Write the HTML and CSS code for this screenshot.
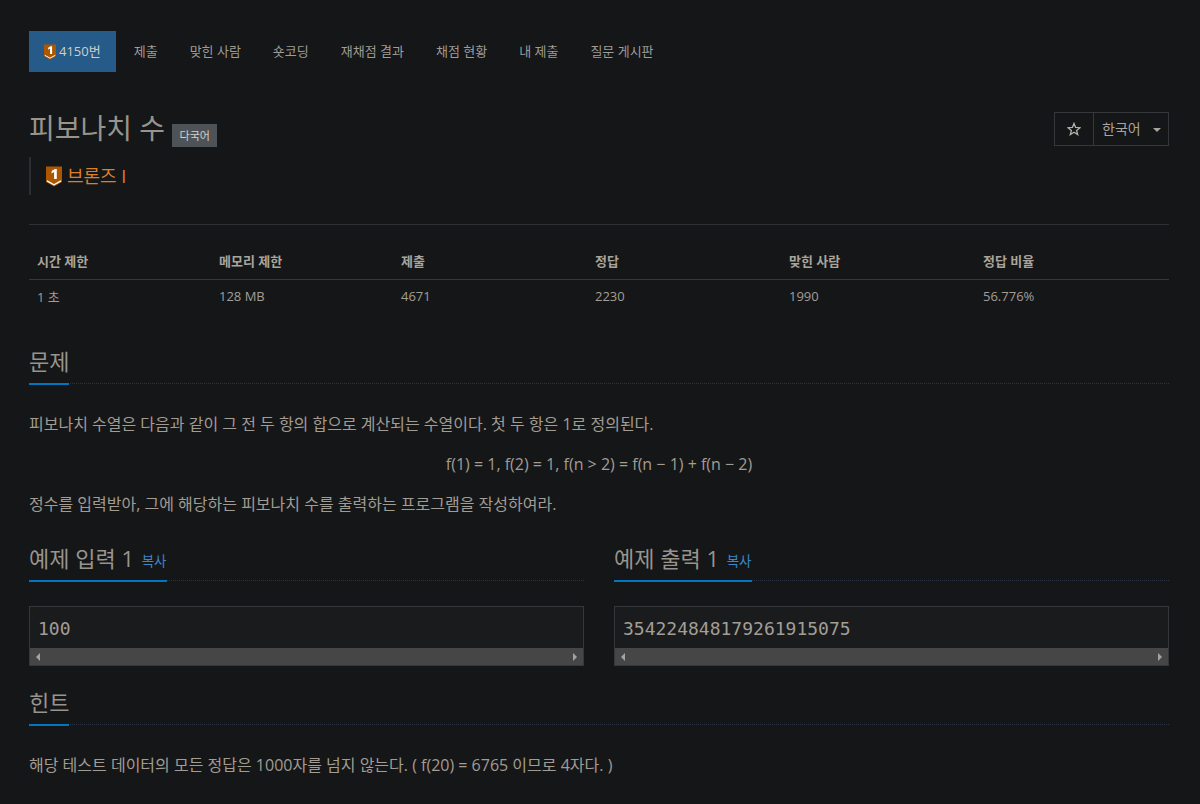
FILE: index.html
```html
<!DOCTYPE html>
<html lang="ko">
<head>
<meta charset="utf-8">
<title>피보나치 수</title>
<link rel="stylesheet" href="styles.css">
</head>
<body>
<svg class="defs" width="0" height="0" aria-hidden="true">
  <symbol id="tier" viewBox="0 0 16 20">
    <path d="M0 0H16V15.5L8 20L0 15.5Z" fill="#ad5600"/>
    <path d="M1 14.4L8 18.2L15 14.4" fill="none" stroke="#fff" stroke-width="1.3"/>
    <path d="M5.6 4.4L8.8 2.4H10.8V12.6H8.1V5.4L5.6 6.9Z" fill="#fff"/>
  </symbol>
</svg>
<main class="page">
  <nav class="tabs">
    <a class="tab active"><svg class="tier-small"><use href="#tier"/></svg>4150번</a>
    <a class="tab">제출</a>
    <a class="tab">맞힌 사람</a>
    <a class="tab">숏코딩</a>
    <a class="tab">재채점 결과</a>
    <a class="tab">채점 현황</a>
    <a class="tab">내 제출</a>
    <a class="tab">질문 게시판</a>
  </nav>

  <header class="head">
    <div class="head-left">
      <h1 class="title"><span class="title-text">피보나치 수</span><span class="badge">다국어</span></h1>
      <div class="tier-line"><svg class="tier-big"><use href="#tier"/></svg><a class="tier-name">브론즈 I</a></div>
    </div>
    <div class="btn-group">
      <span class="btn star"><svg class="star-icon" viewBox="0 0 14 14"><path d="M7 1.4L8.6 5.4L12.9 5.7L9.6 8.4L10.7 12.6L7 10.3L3.3 12.6L4.4 8.4L1.1 5.7L5.4 5.4Z" fill="none" stroke="#b5b0a8" stroke-width="1.3"/></svg></span>
      <span class="btn lang">한국어<i class="caret"></i></span>
    </div>
  </header>

  <hr class="rule">

  <table class="info">
    <thead>
      <tr><th class="c1">시간 제한</th><th class="c2">메모리 제한</th><th class="c3">제출</th><th class="c4">정답</th><th class="c5">맞힌 사람</th><th>정답 비율</th></tr>
    </thead>
    <tbody>
      <tr><td>1 초</td><td>128 MB</td><td>4671</td><td>2230</td><td>1990</td><td>56.776%</td></tr>
    </tbody>
  </table>

  <section class="section problem">
    <div class="headline"><h2>문제</h2></div>
    <div class="body">
      <p>피보나치 수열은 다음과 같이 그 전 두 항의 합으로 계산되는 수열이다. 첫 두 항은 1로 정의된다.</p>
      <p class="center">f(1) = 1, f(2) = 1, f(n &gt; 2) = f(n − 1) + f(n − 2)</p>
      <p>정수를 입력받아, 그에 해당하는 피보나치 수를 출력하는 프로그램을 작성하여라.</p>
    </div>
  </section>

  <div class="samples">
    <section class="sample">
      <div class="headline"><h2>예제 입력 1 <small>복사</small></h2></div>
      <div class="pre">
        <div class="code">100</div>
        <div class="scroll"><i class="arr left"></i><i class="arr right"></i></div>
      </div>
    </section>
    <section class="sample">
      <div class="headline"><h2>예제 출력 1 <small>복사</small></h2></div>
      <div class="pre">
        <div class="code">354224848179261915075</div>
        <div class="scroll"><i class="arr left"></i><i class="arr right"></i></div>
      </div>
    </section>
  </div>

  <section class="section hint">
    <div class="headline"><h2>힌트</h2></div>
    <div class="body">
      <p>해당 테스트 데이터의 모든 정답은 1000자를 넘지 않는다. ( f(20) = 6765 이므로 4자다. )</p>
    </div>
  </section>
</main>
</body>
</html>
```
FILE: styles.css
```css
* { box-sizing: border-box; }
html, body { margin: 0; padding: 0; }
body {
  background: #151618;
  color: #a29c93;
  font-family: "Open Sans", "Noto Sans CJK KR", sans-serif;
  font-size: 14px;
  height: 804px;
  overflow: hidden;
}
.defs { display: block; height: 0; }
.page { padding: 31px 31px 0 29px; }

.tabs { display: flex; height: 41px; }
.tab {
  display: flex;
  align-items: center;
  padding: 0 15px 2px;
  margin-right: 2px;
  font-size: 13px;
  color: #9f9c95;
}
.tab.active { background: #265a88; color: #d2cec6; margin-right: 3px; }
.tier-small { width: 12px; height: 16px; margin: 2px 3px 0 0; }

.head { display: flex; justify-content: space-between; margin-top: 40px; }
.title {
  display: flex;
  align-items: flex-end;
  margin: 0;
  font-size: 28px;
  font-weight: 400;
  line-height: 36px;
  color: #98948c;
}
.title-text { margin-top: -2px; padding-bottom: 2px; }
.badge {
  background: #4e5358;
  color: #d4d0c8;
  font-size: 11px;
  line-height: 23px;
  height: 23px;
  padding: 0 7.5px;
  margin-left: 7px;
  margin-bottom: 1px;
}
.tier-line {
  display: flex;
  align-items: center;
  margin-top: 9px;
  height: 38px;
  padding-left: 15px;
  border-left: 2px solid #2b2d30;
}
.tier-big { width: 16px; height: 21px; margin-right: 5px; }
.tier-name { color: #dd7f2a; font-size: 18px; line-height: 24px; }

.btn-group { display: flex; height: 34px; border: 1px solid #35373a; }
.btn { display: flex; align-items: center; justify-content: center; color: #a9a59d; font-size: 14px; }
.star { width: 39px; border-right: 1px solid #35373a; }
.star-icon { width: 14px; height: 14px; }
.lang { width: 74px; padding: 0 0 2px 8px; justify-content: flex-start; }
.caret {
  margin: 3px 0 0 12px;
  border-left: 4px solid transparent;
  border-right: 4px solid transparent;
  border-top: 4px solid #a9a59d;
}

.rule { margin: 29px 0 0; border: 0; border-top: 1px solid #2e3033; }

.info { width: 100%; border-collapse: collapse; table-layout: fixed; margin-top: 19px; font-size: 13px; }
.info th, .info td { text-align: left; padding: 0 8px 2px; }
.info th { height: 35px; border-bottom: 1px solid #35373a; font-weight: 700; color: #a9a59d; }
.info td { height: 36px; color: #a29e96; }
.c1, .c2 { width: 182px; }
.c3, .c4, .c5 { width: 194px; }

.section.problem { margin-top: 32px; }
.headline { border-bottom: 1px dotted #2a3440; height: 37px; }
.headline h2 {
  display: inline-block;
  margin: 0;
  height: 38px;
  font-size: 22px;
  font-weight: 400;
  line-height: 28px;
  color: #98948c;
  border-bottom: 2px solid #0076c0;
}
.headline small { font-size: 13.5px; color: #3c87c8; margin-left: 2px; vertical-align: 1px; }

.body { margin-top: 30px; font-size: 16px; color: #a29c93; }
.body p { margin: 0 0 20px; line-height: 20px; }
.center { text-align: center; }

.samples { display: flex; gap: 30px; margin-top: 30px; }
.sample { flex: 1; }
.pre {
  margin-top: 25px;
  height: 60px;
  background: #1a1b1d;
  border: 1px solid #35373a;
  display: flex;
  flex-direction: column;
}
.code {
  flex: 1;
  padding: 12px 8px 0;
  font-family: "DejaVu Sans Mono", monospace;
  font-size: 18px;
  line-height: 19px;
  color: #a29e96;
}
.scroll {
  height: 17px;
  background: #464646;
  display: flex;
  align-items: center;
  justify-content: space-between;
  padding: 0 6px;
}
.arr { border-top: 4px solid transparent; border-bottom: 4px solid transparent; }
.arr.left { border-right: 4px solid #a3a3a3; }
.arr.right { border-left: 4px solid #a3a3a3; }

.section.hint { margin-top: 22px; }
.hint .body { margin-top: 30px; }
```
